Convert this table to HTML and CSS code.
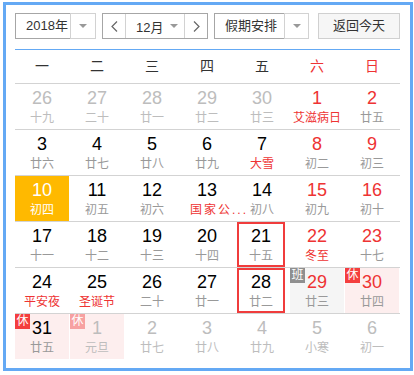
FILE: index.html
```html
<!DOCTYPE html>
<html lang="zh">
<head>
<meta charset="utf-8">
<title>万年历</title>
<link rel="stylesheet" href="styles.css">
</head>
<body>
<div class="cal">
  <div class="toolbar">
    <div class="sel year">
      <span class="sel-txt">2018年</span>
      <span class="sel-arr"><i class="tri"></i></span>
    </div>
    <div class="month">
      <span class="nav"><svg width="7" height="11" viewBox="0 0 7 11"><polyline points="6,0.5 1,5.5 6,10.5" fill="none" stroke="#666" stroke-width="1.2"/></svg></span>
      <span class="month-txt">12月<i class="tri small"></i></span>
      <span class="nav"><svg width="7" height="11" viewBox="0 0 7 11"><polyline points="1,0.5 6,5.5 1,10.5" fill="none" stroke="#666" stroke-width="1.2"/></svg></span>
    </div>
    <div class="sel holiday">
      <span class="sel-txt">假期安排</span>
      <span class="sel-arr"><i class="tri"></i></span>
    </div>
    <button class="today">返回今天</button>
  </div>

  <div class="week-head">
    <span>一</span><span>二</span><span>三</span><span>四</span><span>五</span><span class="red">六</span><span class="red">日</span>
  </div>

  <div class="row">
    <div class="day other"><b>26</b><em>十九</em></div>
    <div class="day other"><b>27</b><em>二十</em></div>
    <div class="day other"><b>28</b><em>廿一</em></div>
    <div class="day other"><b>29</b><em>廿二</em></div>
    <div class="day other"><b>30</b><em>廿三</em></div>
    <div class="day wk"><b>1</b><em class="fest">艾滋病日</em></div>
    <div class="day wk"><b>2</b><em>廿五</em></div>
  </div>

  <div class="row">
    <div class="day"><b>3</b><em>廿六</em></div>
    <div class="day"><b>4</b><em>廿七</em></div>
    <div class="day"><b>5</b><em>廿八</em></div>
    <div class="day"><b>6</b><em>廿九</em></div>
    <div class="day"><b>7</b><em class="fest">大雪</em></div>
    <div class="day wk"><b>8</b><em>初二</em></div>
    <div class="day wk"><b>9</b><em>初三</em></div>
  </div>

  <div class="row">
    <div class="day today-cell"><b>10</b><em>初四</em></div>
    <div class="day"><b>11</b><em>初五</em></div>
    <div class="day"><b>12</b><em>初六</em></div>
    <div class="day"><b>13</b><em class="fest long">国家公...</em></div>
    <div class="day"><b>14</b><em>初八</em></div>
    <div class="day wk"><b>15</b><em>初九</em></div>
    <div class="day wk"><b>16</b><em>初十</em></div>
  </div>

  <div class="row">
    <div class="day"><b>17</b><em>十一</em></div>
    <div class="day"><b>18</b><em>十二</em></div>
    <div class="day"><b>19</b><em>十三</em></div>
    <div class="day"><b>20</b><em>十四</em></div>
    <div class="day boxed"><b>21</b><em>十五</em></div>
    <div class="day wk"><b>22</b><em class="fest">冬至</em></div>
    <div class="day wk"><b>23</b><em>十七</em></div>
  </div>

  <div class="row">
    <div class="day"><b>24</b><em class="fest">平安夜</em></div>
    <div class="day"><b>25</b><em class="fest">圣诞节</em></div>
    <div class="day"><b>26</b><em>二十</em></div>
    <div class="day"><b>27</b><em>廿一</em></div>
    <div class="day boxed"><b>28</b><em>廿二</em></div>
    <div class="day wk work"><span class="badge ban">班</span><b>29</b><em>廿三</em></div>
    <div class="day wk rest"><span class="badge xiu">休</span><b>30</b><em>廿四</em></div>
  </div>

  <div class="row">
    <div class="day rest"><span class="badge xiu">休</span><b>31</b><em>廿五</em></div>
    <div class="day other rest"><span class="badge xiu faded">休</span><b>1</b><em>元旦</em></div>
    <div class="day other"><b>2</b><em>廿七</em></div>
    <div class="day other"><b>3</b><em>廿八</em></div>
    <div class="day other"><b>4</b><em>廿九</em></div>
    <div class="day other"><b>5</b><em>小寒</em></div>
    <div class="day other"><b>6</b><em>初一</em></div>
  </div>
</div>
</body>
</html>
```

FILE: styles.css
```css
html, body {
  margin: 0;
  padding: 0;
  background: #fff;
}

body {
  padding: 2px 0 0 3px;
  font-family: "Liberation Sans", "Noto Sans CJK SC", sans-serif;
  color: #333;
}

.cal {
  box-sizing: border-box;
  width: 410px;
  height: 369px;
  border: 3px solid #64a9f4;
  padding: 8px 10px 0 9px;
  background: #fff;
}

/* toolbar */
.toolbar {
  display: flex;
  height: 26px;
  margin-bottom: 10px;
}

.sel {
  display: flex;
  height: 26px;
}

.sel-txt {
  box-sizing: border-box;
  height: 26px;
  border: 1px solid #a6a6a6;
  border-right: none;
  font-size: 13px;
  line-height: 24px;
  padding-left: 10px;
  color: #333;
}

.year .sel-txt { width: 55px; }
.holiday .sel-txt { width: 70px; }

.sel-arr {
  box-sizing: border-box;
  height: 26px;
  border: 1px solid #d2d2d2;
  display: flex;
  align-items: center;
  justify-content: center;
}

.year .sel-arr { width: 26px; }
.holiday .sel-arr { width: 25px; }

.tri {
  display: block;
  width: 0;
  height: 0;
  border-left: 4px solid transparent;
  border-right: 4px solid transparent;
  border-top: 4px solid #999;
}

.tri.small {
  border-left-width: 4px;
  border-right-width: 4px;
  border-top-width: 4px;
  margin-left: 7px;
}

.month {
  box-sizing: border-box;
  display: flex;
  width: 106px;
  height: 26px;
  border: 1px solid #a6a6a6;
  margin-left: 6px;
}

.nav {
  width: 22px;
  height: 24px;
  display: flex;
  align-items: center;
  justify-content: center;
}

.month-txt {
  box-sizing: border-box;
  width: 60px;
  height: 24px;
  border-left: 1px solid #d2d2d2;
  border-right: 1px solid #d2d2d2;
  display: flex;
  align-items: center;
  padding-left: 10px;
  font-size: 13px;
  color: #333;
}

.holiday {
  margin-left: 6px;
}

.today {
  box-sizing: border-box;
  width: 82px;
  height: 26px;
  margin: 0 0 0 9px;
  padding: 0;
  border: 1px solid #d0d0d0;
  background: #f6f6f6;
  font-family: "Liberation Sans", "Noto Sans CJK SC", sans-serif;
  font-size: 13px;
  color: #333;
  line-height: 24px;
}

/* header */
.week-head {
  display: grid;
  grid-template-columns: repeat(7, 54px);
  column-gap: 1px;
  width: 385px;
  height: 33px;
  border-top: 1px solid #64a9f4;
}

.week-head span {
  text-align: center;
  line-height: 33px;
  font-size: 14px;
  color: #333;
}

.week-head .red { color: #ee3333; }

/* rows */
.row {
  display: grid;
  grid-template-columns: repeat(7, 54px);
  column-gap: 1px;
  width: 385px;
  border-top: 1px solid #d3d3d3;
}

.day {
  position: relative;
  box-sizing: border-box;
  height: 45px;
  padding-top: 5px;
  text-align: center;
}

.day b {
  display: block;
  font-weight: normal;
  font-size: 18px;
  line-height: 18px;
  color: #000;
  font-family: "Liberation Sans", sans-serif;
}

.day em {
  display: block;
  margin-top: 3px;
  font-style: normal;
  font-size: 12px;
  line-height: 16px;
  color: #999;
  white-space: nowrap;
}

.day.wk b { color: #ee3333; }
.day em.fest { color: #ee3333; }
.day em.long { letter-spacing: 2px; padding-left: 10px; }

.day.other b,
.day.other em { color: #bdbdbd; }

.today-cell { background: #ffb900; }
.today-cell b,
.today-cell em { color: #fff; }

.boxed {
  border: 2px solid #f03c3c;
  width: 48px;
  margin-left: 2px;
  padding-top: 3px;
}

.work { background: #f5f5f5; }
.rest { background: #fdeeee; }

.badge {
  position: absolute;
  left: 0;
  top: 0;
  width: 15px;
  height: 15px;
  font-size: 12px;
  line-height: 15px;
  text-align: center;
  color: #fff;
}

.badge.xiu { background: #f43e3e; }
.badge.ban { background: #8f8f8f; }
.badge.faded { background: #f7a1a1; }
```
